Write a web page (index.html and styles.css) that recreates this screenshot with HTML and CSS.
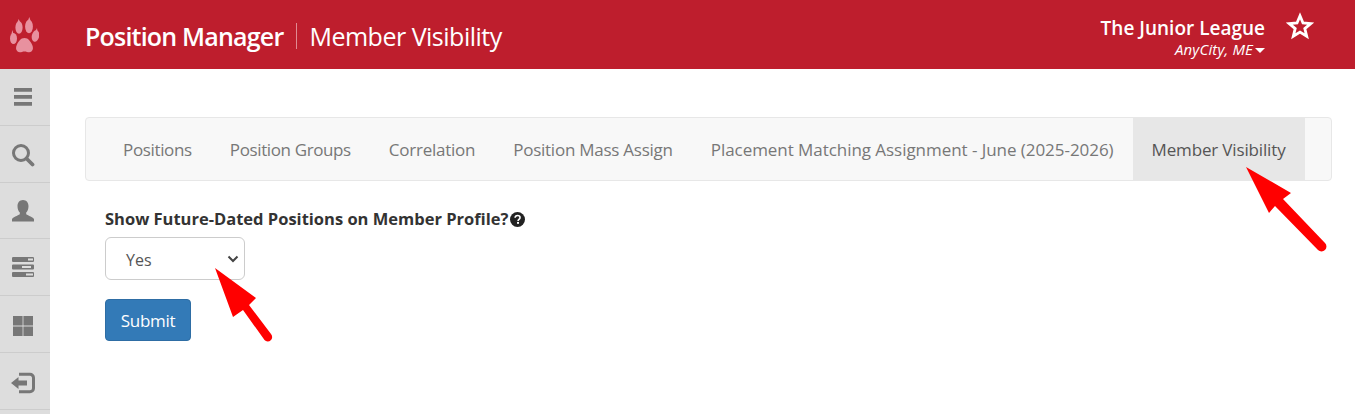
FILE: index.html
```html
<!DOCTYPE html>
<html lang="en">
<head>
    <meta charset="UTF-8">
    <meta name="viewport" content="width=device-width, initial-scale=1.0">
    <title>Member Visibility</title>
    <link rel="stylesheet" href="styles.css">
</head>
<body>
    <header class="topbar">
        <div class="logo">
            <svg width="30" height="38" viewBox="8 15 30 38">
                <g fill="#e8919f">
                    <path d="M23.500 37c4 0 6 3.500 7.500 6.500 1.200 2.500 1.500 5-.3 6.800-1.500 1.400-3.200 1-4.700.6-1.700-.5-3.300-.5-5 0-1.500.4-3.200.8-4.700-.6-1.800-1.800-1.500-4.300-.3-6.800 1.500-3 3.500-6.500 7.500-6.500z"/>
                    <ellipse cx="12.500" cy="37.500" rx="3.500" ry="5.500"/>
                    <ellipse cx="18" cy="26.500" rx="3.600" ry="6.200"/>
                    <ellipse cx="28" cy="25.500" rx="3.900" ry="6.800"/>
                    <ellipse cx="34.500" cy="35" rx="3.700" ry="5.800" transform="rotate(12 34.500 35)"/>
                    <path d="M10.500 33l.8-4 1.200 4zM16.500 21l1.200-3 1.300 3zM27 19.500l1.300-3.500 1.200 3.500zM34.500 30l1.500-3 .5 3.500z"/>
                </g>
            </svg>
        </div>
        <div class="titles">
            <span class="app-name">Position Manager</span>
            <span class="page-name">Member Visibility</span>
        </div>
        <div class="org">
            <div class="org-name">The Junior League</div>
            <div class="org-city">AnyCity, ME<span class="caret"></span></div>
        </div>
        <svg class="star" width="28" height="28" viewBox="0 0 28 28">
            <path d="M14 3.800l3 7.200 7.700.6-5.900 5 1.900 7.600-6.700-4.100-6.700 4.100 1.900-7.600-5.900-5 7.700-.6z" fill="none" stroke="#fff" stroke-width="2.800"/>
        </svg>
    </header>

    <div class="main">
        <nav class="sidebar">
            <a class="side-item">
                <svg width="20" height="20" viewBox="0 0 20 20"><path d="M1 1h18v3.800H1zM1 8h18v3.800H1zM1 15h18v3.800H1z" fill="#777"/></svg>
            </a>
            <a class="side-item">
                <svg class="nudge" width="24" height="24" viewBox="0 0 24 24"><circle cx="10" cy="10" r="7.500" fill="none" stroke="#777" stroke-width="3"/><path d="M15.500 15.500l6 6" stroke="#777" stroke-width="3.800" stroke-linecap="round"/></svg>
            </a>
            <a class="side-item">
                <svg class="nudge" width="24" height="24" viewBox="0 0 24 24"><path d="M12 1c3.500 0 5.500 2.800 5.500 6.200 0 2.600-1 5-2.300 6.300v1.500c0 1 5.800 2.500 7.800 5v2.500H1V20c2-2.500 7.800-4 7.800-5v-1.500C7.500 12.200 6.500 9.800 6.500 7.200 6.500 3.800 8.500 1 12 1z" fill="#777"/></svg>
            </a>
            <a class="side-item">
                <svg width="24" height="22" viewBox="0 0 24 22"><path d="M2 1h20a1.500 1.500 0 0 1 1 1v3a1.500 1.500 0 0 1-1 1H2a1.500 1.500 0 0 1-1-1V2a1.500 1.500 0 0 1 1-1zM2 8.500h20a1 1 0 0 1 1 1v3a1 1 0 0 1-1 1H2a1 1 0 0 1-1-1v-3a1 1 0 0 1 1-1zM2 16h20a1 1 0 0 1 1 1v3a1 1 0 0 1-1 1H2a1 1 0 0 1-1-1v-3a1 1 0 0 1 1-1z" fill="#777"/><path d="M17 2.500h5v2h-5zM11 10h9v2h-9zM15 17.500h7v2h-7z" fill="#ddd"/></svg>
            </a>
            <a class="side-item">
                <svg class="nudge-more" width="22" height="22" viewBox="0 0 22 22"><path d="M1 1h9.600v9.600H1zM11.400 1H21v9.600h-9.600zM1 11.400h9.600V21H1zM11.400 11.400H21V21h-9.600z" fill="#777"/></svg>
            </a>
            <a class="side-item">
                <svg class="nudge-more" width="26" height="22" viewBox="0 0 26 22"><path d="M9 2.300h11a3.500 3.500 0 0 1 3.500 3.500v10.400a3.500 3.500 0 0 1-3.500 3.500H9" fill="none" stroke="#777" stroke-width="3"/><path d="M1 11l7.500-6v3.500H17v5H8.500V17z" fill="#777"/></svg>
            </a>
        </nav>

        <section class="content">
            <ul class="tabs">
                <li class="tab tab-first">Positions</li>
                <li class="tab tab-groups">Position Groups</li>
                <li class="tab">Correlation</li>
                <li class="tab tab-mass">Position Mass Assign</li>
                <li class="tab tab-long">Placement Matching Assignment - June (2025-2026)</li>
                <li class="tab active">Member Visibility</li>
            </ul>

            <form class="form">
                <label class="field-label">Show Future-Dated Positions on Member Profile?<svg class="help" width="15" height="15" viewBox="0 0 16 16"><circle cx="8" cy="8" r="8" fill="#222"/><path d="M5.400 6.200C5.500 4.700 6.600 3.800 8.100 3.800c1.500 0 2.600.9 2.600 2.200 0 1.900-2.100 1.900-2.100 3.500" fill="none" stroke="#fff" stroke-width="1.700"/><rect x="7.500" y="10.600" width="2.100" height="2" fill="#fff"/></svg></label>
                <div class="select-box">
                    <span class="select-value">Yes</span>
                    <svg width="12" height="8" viewBox="0 0 12 8"><path d="M1.500 1.500L6 6l4.500-4.500" fill="none" stroke="#444" stroke-width="2"/></svg>
                </div>
                <button class="btn" type="button">Submit</button>
            </form>
        </section>
    </div>

    <!-- red callout arrows sit over the page -->
    <svg class="callouts" width="1355" height="414" viewBox="0 0 1355 414">
        <g fill="#ff0000">
            <path d="M1246 167L1291 193 1283 199 1325 243a4.800 4.800 0 0 1-7 7L1275 206 1269 213z"/>
            <path d="M215 268L256 298 249 305 271 334a4 4 0 0 1-6.500 6L243 310 233 317z"/>
        </g>
    </svg>
</body>
</html>
```

FILE: styles.css
```css
* {
    box-sizing: border-box;
}

body {
    font-family: "Open Sans", Arial, sans-serif;
    margin: 0;
    padding: 0;
    height: 414px;
    overflow: hidden;
    background-color: #fff;
    color: #222;
}

.topbar {
    display: flex;
    align-items: center;
    height: 69px;
    background-color: #be1e2d;
    color: #fff;
}

.logo {
    width: 50px;
    display: flex;
    justify-content: center;
    padding-right: 3px;
}

.titles {
    display: flex;
    align-items: center;
    margin-left: 35px;
    flex: 1;
    padding-top: 2px;
}

.app-name {
    font-size: 25px;
    font-weight: 600;
    letter-spacing: -0.8px;
    padding-right: 13px;
    border-right: 1px solid #e08a92;
    line-height: 26px;
}

.page-name {
    font-size: 25px;
    letter-spacing: -0.5px;
    padding-left: 12px;
    line-height: 26px;
}

.org {
    text-align: right;
    margin-right: 21px;
    padding-top: 5px;
}

.org-name {
    font-size: 19px;
    font-weight: 600;
    line-height: 24px;
}

.org-city {
    font-size: 15px;
    font-style: italic;
    letter-spacing: 0.15px;
    line-height: 18px;
}

.caret {
    display: inline-block;
    margin-left: 2px;
    vertical-align: middle;
    border-style: solid;
    border-width: 5px 5px 0 5px;
    border-color: #fff transparent transparent transparent;
}

.star {
    margin-right: 41px;
    margin-top: -18px;
}

.main {
    display: flex;
    height: 345px;
}

.sidebar {
    width: 50px;
    background-color: #ddd;
}

.side-item {
    display: flex;
    justify-content: center;
    align-items: center;
    height: 56.800px;
    padding-right: 5px;
    border-bottom: 1px solid #ccc;
}

.nudge {
    margin-top: 2px;
}

.nudge-more {
    margin-top: 4px;
}

.content {
    flex: 1;
    padding: 48px 23px 0 35px;
}

.tabs {
    display: flex;
    list-style: none;
    height: 64px;
    margin: 0;
    padding: 0 0 0 18px;
    background-color: #f8f8f8;
    border: 1px solid #e7e7e7;
    border-radius: 4px;
}

.tab {
    padding: 0 19px;
    font-size: 17px;
    letter-spacing: -0.25px;
    line-height: 63px;
    color: #777;
    white-space: nowrap;
}

.tab-first {
    letter-spacing: -0.35px;
}

.tab-groups {
    letter-spacing: -0.38px;
}

.tab-mass {
    letter-spacing: -0.25px;
}

.tab-long {
    letter-spacing: -0.05px;
}

.tab.active {
    letter-spacing: -0.15px;
    background-color: #e7e7e7;
    color: #555;
}

.form {
    padding: 27px 0 0 20px;
}

.field-label {
    display: flex;
    align-items: center;
    font-size: 16.500px;
    font-weight: 700;
    line-height: 22px;
    color: #333;
}

.help {
    margin-left: 2px;
}

.select-box {
    display: flex;
    justify-content: space-between;
    align-items: center;
    width: 140px;
    height: 43px;
    margin-top: 7px;
    padding: 0 5px 0 20px;
    border: 1px solid #ccc;
    border-radius: 6px;
    font-size: 16px;
    color: #555;
}

.select-value {
    padding-top: 2px;
}

.btn {
    display: block;
    width: 86px;
    height: 42px;
    margin-top: 19px;
    padding: 0;
    background-color: #337ab7;
    border: 1px solid #2e6da4;
    border-radius: 4px;
    color: #fff;
    font-family: inherit;
    font-size: 17px;
    letter-spacing: -0.3px;
}

.callouts {
    position: absolute;
    top: 0;
    left: 0;
    pointer-events: none;
}
```
